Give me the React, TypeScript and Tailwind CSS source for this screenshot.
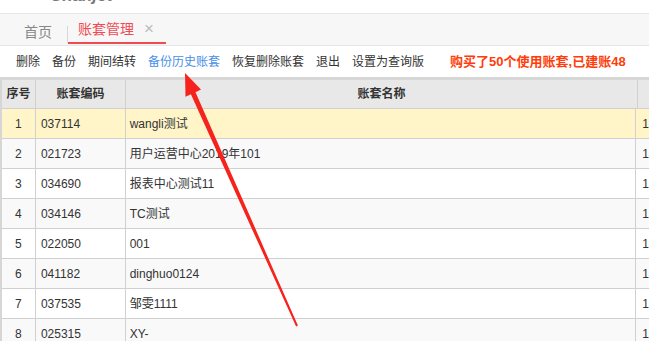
import React from "react"

const rows = [
  { no: 1, code: "037114", name: "wangli测试" },
  { no: 2, code: "021723", name: "用户运营中心2019年101" },
  { no: 3, code: "034690", name: "报表中心测试11" },
  { no: 4, code: "034146", name: "TC测试" },
  { no: 5, code: "022050", name: "001" },
  { no: 6, code: "041182", name: "dinghuo0124" },
  { no: 7, code: "037535", name: "邹雯1111" },
  { no: 8, code: "025315", name: "XY-" },
]

const tools = ["删除", "备份", "期间结转", "备份历史账套", "恢复删除账套", "退出", "设置为查询版"]

function Arrow() {
  // red annotation arrow pointing at 备份历史账套
  return (
    <svg className="pointer-events-none absolute left-0 top-0" width="649" height="341" viewBox="0 0 649 341">
      <polygon
        points="185,73 201,89.5 195.5,92.2 297.9,325.6 296.1,326.4 190.9,94.2 185.5,96.8"
        fill="#f5231c"
      />
    </svg>
  )
}

export default function App() {
  return (
    <div
      className="relative h-[341px] w-[649px] overflow-hidden bg-white text-[#333]"
      style={{ fontFamily: '"Liberation Sans", "Noto Sans CJK SC", sans-serif' }}
    >
      {/* clipped logo strip */}
      <div className="flex h-[13px] overflow-hidden">
        <div className="w-[105px] pl-[50px]">
          <span className="-mt-[14px] block text-[17px] font-bold italic leading-[20px] text-[#7a7a7a]">Chanjet</span>
        </div>
        <div className="flex-1" />
      </div>

      {/* tabs */}
      <div className="flex h-[33px] items-end border-b border-t border-[#e6e6e6] bg-[#f7f7f7] text-[14px] whitespace-nowrap">
        <span className="mb-[3px] ml-[24px] leading-[20px] text-[#888]">首页</span>
        <span className="mb-[2px] ml-[15px] h-[17px] w-px bg-[#d8d8d8]" />
        <div className="relative flex h-[26px] items-start pl-[10px] pr-[12px]">
          <span className="leading-[20px] text-[#f04a55]">账套管理</span>
          <span className="ml-[10px] text-[17px] leading-[20px] text-[#bbb]">×</span>
          <span className="absolute bottom-[1px] left-0 right-0 h-[2px] bg-[#f04a55]" />
        </div>
      </div>

      {/* toolbar */}
      <div className="flex h-[31px] items-center whitespace-nowrap pl-[16px] text-[12px]">
        {tools.map((t, i) => (
          <span key={t} className={`mr-[12px] shrink-0 ${i === 3 ? "text-[#4a8fe8]" : "text-[#333]"}`}>
            {t}
          </span>
        ))}
        <span className="ml-[14px] shrink-0 text-[13px] font-bold text-[#ff3d0a]">购买了50个使用账套,已建账48</span>
      </div>

      {/* grid */}
      <div className="border-l-2 border-t-[3px] border-[#d6d6d6] text-[12px] whitespace-nowrap">
        <div className="flex h-[29px] border-b border-[#d0d0d0] bg-[#e8e8e8] font-bold">
          <div className="flex w-[34px] items-center justify-center border-r border-[#d0d0d0]">序号</div>
          <div className="flex w-[90px] items-center justify-center border-r border-[#d0d0d0]">账套编码</div>
          <div className="flex w-[512px] items-center justify-center border-r border-[#d0d0d0]">账套名称</div>
          <div className="flex-1" />
        </div>
        {rows.map((r, i) => (
          <div
            key={r.no}
            className={`flex h-[30px] border-b border-[#d0d0d0] ${
              i === 0 ? "bg-[#fff5c9]" : i % 2 === 1 ? "bg-[#f9f9f9]" : "bg-white"
            }`}
          >
            <div className="flex w-[34px] items-center justify-center border-r border-[#d0d0d0]">{r.no}</div>
            <div className="flex w-[90px] items-center border-r border-[#d0d0d0] pl-[5px]">{r.code}</div>
            <div className="flex w-[512px] items-center border-r border-[#d0d0d0] pl-[4px]">{r.name}</div>
            <div className="flex flex-1 items-center pl-[6px]">1</div>
          </div>
        ))}
      </div>

      <Arrow />
    </div>
  )
}
